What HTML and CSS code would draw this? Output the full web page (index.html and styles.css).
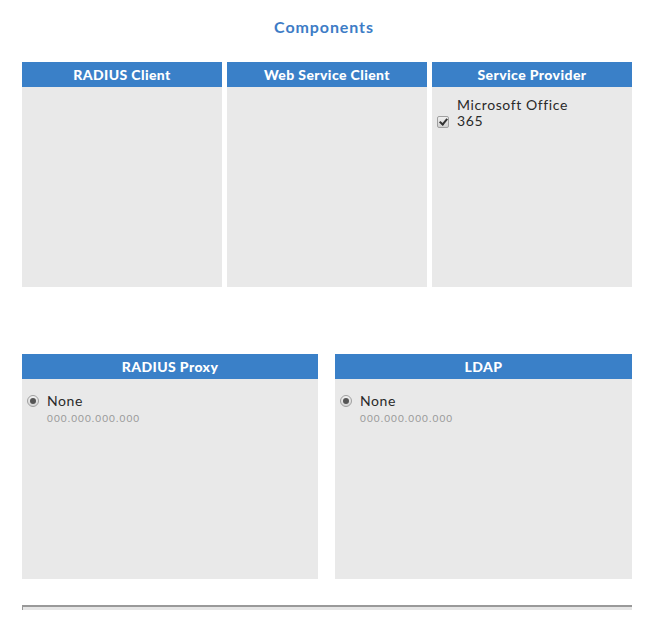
FILE: index.html
```html
<!DOCTYPE html>
<html>
<head>
<meta charset="utf-8">
<link rel="stylesheet" href="styles.css">
</head>
<body>
<div class="page">
  <h1 class="title">Components</h1>
  <div class="row row-top">
    <div class="panel">
      <div class="panel-head">RADIUS Client</div>
      <div class="panel-body"></div>
    </div>
    <div class="panel">
      <div class="panel-head">Web Service Client</div>
      <div class="panel-body"></div>
    </div>
    <div class="panel">
      <div class="panel-head">Service Provider</div>
      <div class="panel-body">
        <label class="check-item"><input type="checkbox" class="check" checked><span class="check-text">Microsoft Office 365</span></label>
      </div>
    </div>
  </div>
  <div class="row row-bottom">
    <div class="panel">
      <div class="panel-head">RADIUS Proxy</div>
      <div class="panel-body">
        <label class="radio-item"><input type="radio" class="radio" name="proxy" checked><span class="radio-text"><span class="radio-name">None</span><span class="radio-ip">000.000.000.000</span></span></label>
      </div>
    </div>
    <div class="panel">
      <div class="panel-head">LDAP</div>
      <div class="panel-body">
        <label class="radio-item"><input type="radio" class="radio" name="ldap" checked><span class="radio-text"><span class="radio-name">None</span><span class="radio-ip">000.000.000.000</span></span></label>
      </div>
    </div>
  </div>
  <div class="footer-box"></div>
</div>
</body>
</html>
```
FILE: styles.css
```css
html, body {
  margin: 0;
  padding: 0;
  background: #ffffff;
}
body {
  font-family: "Lato", "DejaVu Sans", sans-serif;
  color: #333333;
  overflow: hidden;
}
.page {
  padding: 0 20px 0 22px;
}
.title {
  margin: 0;
  padding: 17px 6px 0 0;
  height: 62px;
  box-sizing: border-box;
  font-size: 16px;
  line-height: 20px;
  font-weight: 700;
  color: #3d7cc6;
  text-align: center;
  letter-spacing: 0.9px;
}
.row {
  display: grid;
}
.row-top {
  grid-template-columns: 200px 200px 200px;
  column-gap: 5px;
}
.row-bottom {
  margin-top: 67px;
  grid-template-columns: 296px 297px;
  column-gap: 17px;
}
.panel {
  height: 225px;
  background: #e9e9e9;
  display: flex;
  flex-direction: column;
}
.panel-head {
  height: 25px;
  background: #3a80c8;
  color: #ffffff;
  font-size: 14px;
  font-weight: 900;
  line-height: 25px;
  text-align: center;
  letter-spacing: 0.4px;
}
.panel-body {
  flex: 1;
  padding: 10px 5px;
}
.check-item {
  display: flex;
  align-items: flex-end;
  font-size: 14px;
  line-height: 16px;
  letter-spacing: 0.6px;
  color: #2a2a2a;
}
.check {
  appearance: none;
  -webkit-appearance: none;
  margin: 0 8px 1px 0;
  width: 12px;
  height: 12px;
  flex: none;
  border: 1px solid #a0a0a0;
  border-radius: 2px;
  background: linear-gradient(#f0f0f0, #d0d0d0);
  box-sizing: border-box;
  position: relative;
}
.check:checked::after {
  content: "";
  position: absolute;
  left: 3px;
  top: 0px;
  width: 3px;
  height: 6px;
  border-right: 2px solid #333;
  border-bottom: 2px solid #333;
  transform: rotate(40deg);
}
.check-text {
  width: 120px;
}
.radio-item {
  display: flex;
  align-items: flex-start;
  padding-top: 5px;
}
.radio {
  appearance: none;
  -webkit-appearance: none;
  margin: 1px 8px 0 0;
  width: 12px;
  height: 12px;
  flex: none;
  border: 1px solid #a0a0a0;
  border-radius: 50%;
  background: linear-gradient(#f2f2f2, #d4d4d4);
  box-sizing: border-box;
  position: relative;
}
.radio:checked::after {
  content: "";
  position: absolute;
  left: 2px;
  top: 2px;
  width: 6px;
  height: 6px;
  border-radius: 50%;
  background: #555555;
}
.radio-text {
  display: flex;
  flex-direction: column;
}
.radio-name {
  font-size: 14px;
  line-height: 14px;
  letter-spacing: 0.6px;
  color: #2a2a2a;
}
.radio-ip {
  margin-top: 4px;
  font-size: 10px;
  line-height: 12px;
  color: #999999;
  letter-spacing: 1.1px;
}
.footer-box {
  margin-top: 26px;
  height: 3px;
  border-top: 2px solid #999999;
  border-left: 1px solid #999999;
  background: #e6e6e6;
}
```
